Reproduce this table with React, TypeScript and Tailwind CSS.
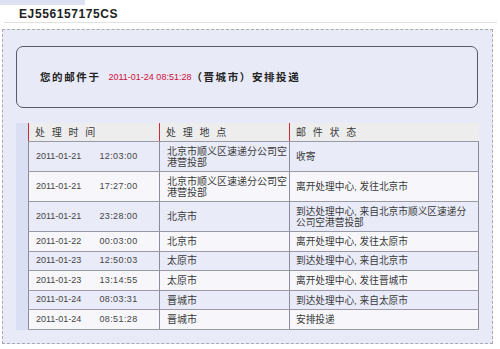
import React from "react";

const FONT = "'Liberation Sans','Noto Sans CJK SC',sans-serif";

type Row = { date: string; time: string; place: string; status: string; tall?: boolean };

const ROWS: Row[] = [
  { date: "2011-01-21", time: "12:03:00", place: "北京市顺义区速递分公司空港营投部", status: "收寄", tall: true },
  { date: "2011-01-21", time: "17:27:00", place: "北京市顺义区速递分公司空港营投部", status: "离开处理中心, 发往北京市", tall: true },
  { date: "2011-01-21", time: "23:28:00", place: "北京市", status: "到达处理中心, 来自北京市顺义区速递分公司空港营投部", tall: true },
  { date: "2011-01-22", time: "00:03:00", place: "北京市", status: "离开处理中心, 发往太原市" },
  { date: "2011-01-23", time: "12:50:03", place: "太原市", status: "到达处理中心, 来自北京市" },
  { date: "2011-01-23", time: "13:14:55", place: "太原市", status: "离开处理中心, 发往晋城市" },
  { date: "2011-01-24", time: "08:03:31", place: "晋城市", status: "到达处理中心, 来自太原市" },
  { date: "2011-01-24", time: "08:51:28", place: "晋城市", status: "安排投递" },
];

const HEADERS = ["处 理 时 间", "处 理 地 点", "邮 件 状 态"];

export default function App() {
  return (
    <div className="w-[500px] h-[349px] bg-white text-[#333] overflow-hidden" style={{ fontFamily: FONT }}>
      {/* top tab + tracking number */}
      <div className="h-[5px] w-[85px] bg-[#dde1f3]" />
      <div className="ml-[4px] mr-[3px] h-[18px] border-b border-[#e2e2e2] pl-[15px] flex items-center">
        <span className="text-[12px] font-bold tracking-[0.6px] text-[#222] leading-none">EJ556157175CS</span>
      </div>

      {/* dashed panel */}
      <div className="mt-[6px] ml-[2px] w-[491px] h-[315px] border border-dashed border-[#a9a9b0] bg-[#e8eaf7] pt-[16px] pl-[13px]">
        <div className="w-[462px] h-[62px] border border-[#5a5a66] rounded-[7px] flex items-center pl-[23px] pt-[1px]">
          <span className="text-[10.5px] font-bold tracking-[1.6px] text-[#222]">您的邮件于</span>
          <span className="ml-[8px] text-[9px] text-[#d0103a]">2011-01-24 08:51:28</span>
          <span className="text-[10.5px] font-bold tracking-[1.6px] text-[#222]">（晋城市）安排投递</span>
        </div>

        <div className="mt-[15px] flex">
          <div className="w-[12px] bg-[#dbdff3]" />
          <div className="w-[451px] text-[10px]">
            <div className="grid grid-cols-[131px_130px_190px] h-[19px] bg-[#ededee] border-b border-[#9a9aa6]">
              {HEADERS.map((h) => (
                <div key={h} className="border-l border-[#cc2a36] pl-[6px] flex items-center tracking-[2px] text-[#3a3a3a]">
                  {h}
                </div>
              ))}
            </div>
            {ROWS.map((r, i) => (
              <div
                key={i}
                className={`grid grid-cols-[131px_130px_190px] border-b border-[#9a9aa6] ${r.tall ? "h-[30px]" : "h-[19.6px]"} ${i % 2 === 0 ? "bg-[#e9ebf8]" : "bg-[#f7f7fb]"}`}
              >
                <div className="border-l border-[#8c8c98] pl-[7px] flex items-center text-[9px] text-[#444]">
                  <span>{r.date}</span>
                  <span className="ml-[18px] tracking-[0.4px]">{r.time}</span>
                </div>
                <div className="border-l border-[#8c8c98] pl-[7px] flex items-center leading-[11px] text-[#3a3a3a]">
                  {r.place}
                </div>
                <div className="border-l border-r border-[#8c8c98] pl-[6px] pr-[6px] flex items-center leading-[11px] text-[9.7px] text-[#3a3a3a]">
                  {r.status}
                </div>
              </div>
            ))}
          </div>
        </div>
      </div>
    </div>
  );
}
